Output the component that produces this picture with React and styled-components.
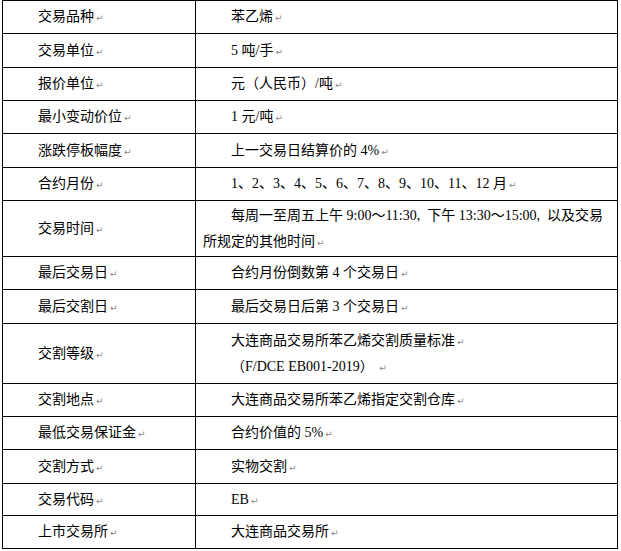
import React from "react";
import styled, { createGlobalStyle } from "styled-components";

const GlobalStyle = createGlobalStyle`
  html, body {
    margin: 0;
    padding: 0;
    background: #ffffff;
  }
  body {
    font-family: "Liberation Serif", "Noto Sans CJK SC", serif;
    color: #000000;
  }
`;

const Page = styled.div`
  padding: 0 0 0 2px;
`;

const Table = styled.table`
  border-collapse: collapse;
  width: 616px;
  table-layout: fixed;
  font-size: 14px;
  line-height: 26px;
`;

const Row = styled.tr`
  height: ${(p) => p.$h}px;
`;

const Cell = styled.td`
  border: 1px solid #000000;
  padding: 0 7px;
  vertical-align: middle;
  width: ${(p) => (p.$label ? "178px" : "auto")};
`;

const Para = styled.p`
  margin: 0;
  text-indent: 28px;
  white-space: pre-wrap;
`;

// Word paragraph mark
const Mark = styled.span`
  display: inline-block;
  text-indent: 0;
  font-family: "DejaVu Sans", sans-serif;
  font-size: 9px;
  line-height: 9px;
  color: #8a8a8a;
  margin-left: 2px;
`;

const rows = [
  { label: "交易品种", value: ["苯乙烯"], h: 33 },
  { label: "交易单位", value: ["5 吨/手"], h: 34 },
  { label: "报价单位", value: ["元（人民币）/吨"], h: 33 },
  { label: "最小变动价位", value: ["1 元/吨"], h: 33 },
  { label: "涨跌停板幅度", value: ["上一交易日结算价的 4%"], h: 34 },
  { label: "合约月份", value: ["1、2、3、4、5、6、7、8、9、10、11、12 月"], h: 33 },
  {
    label: "交易时间",
    value: ["每周一至周五上午 9:00～11:30,  下午 13:30～15:00,  以及交易所规定的其他时间"],
    h: 56,
  },
  { label: "最后交易日", value: ["合约月份倒数第 4 个交易日"], h: 33 },
  { label: "最后交割日", value: ["最后交易日后第 3 个交易日"], h: 34 },
  {
    label: "交割等级",
    value: ["大连商品交易所苯乙烯交割质量标准", "（F/DCE EB001-2019） "],
    h: 60,
  },
  { label: "交割地点", value: ["大连商品交易所苯乙烯指定交割仓库"], h: 33 },
  { label: "最低交易保证金", value: ["合约价值的 5%"], h: 33 },
  { label: "交割方式", value: ["实物交割"], h: 34 },
  { label: "交易代码", value: ["EB"], h: 32 },
  { label: "上市交易所", value: ["大连商品交易所"], h: 33 },
];

export default function App() {
  return (
    <Page>
      <GlobalStyle />
      <Table>
        <tbody>
          {rows.map((r) => (
            <Row key={r.label} $h={r.h}>
              <Cell $label>
                <Para>
                  {r.label}
                  <Mark>↵</Mark>
                </Para>
              </Cell>
              <Cell>
                {r.value.map((v) => (
                  <Para key={v}>
                    {v}
                    <Mark>↵</Mark>
                  </Para>
                ))}
              </Cell>
            </Row>
          ))}
        </tbody>
      </Table>
    </Page>
  );
}
